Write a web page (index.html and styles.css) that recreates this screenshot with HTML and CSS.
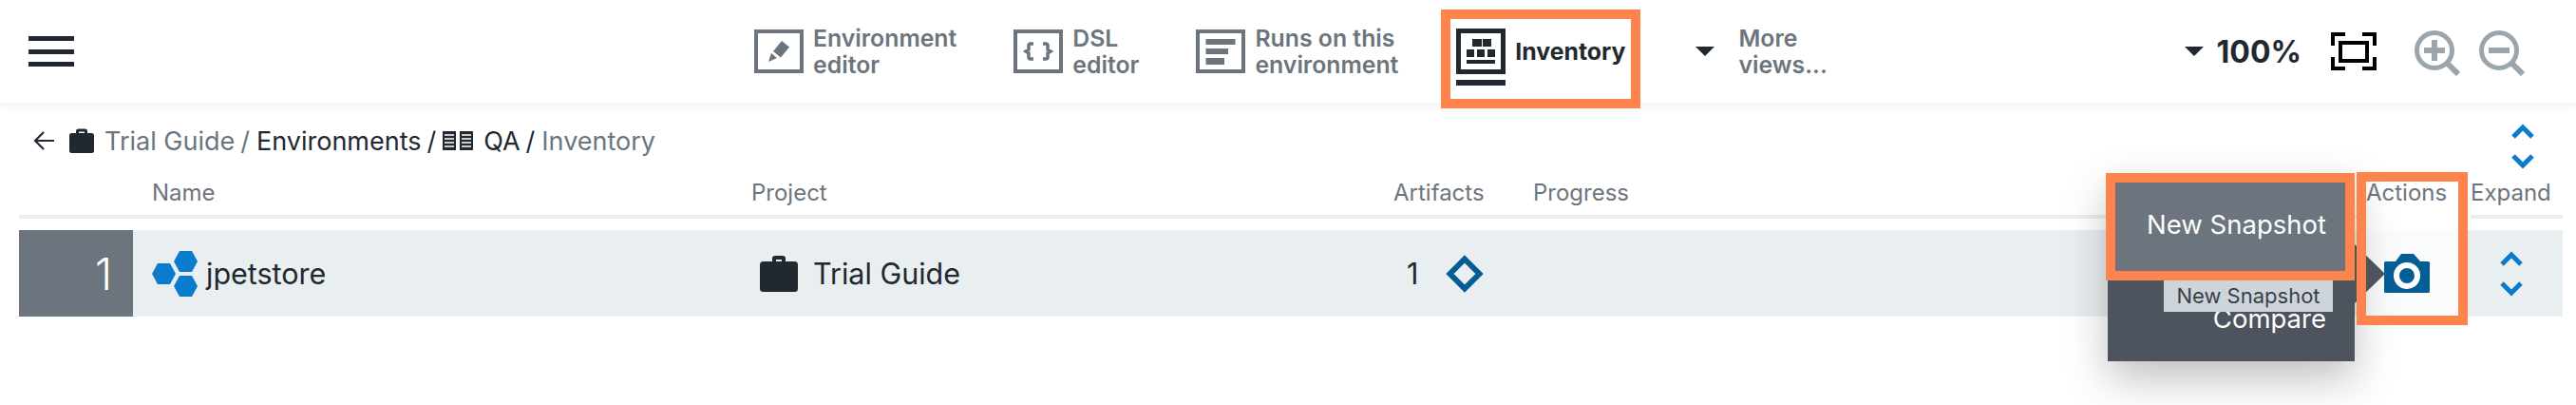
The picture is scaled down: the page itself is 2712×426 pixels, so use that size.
FILE: index.html
```html
<!DOCTYPE html>
<html lang="en">
<head>
<meta charset="utf-8">
<title>Inventory</title>
<link rel="stylesheet" href="styles.css">
</head>
<body>
<header class="topbar">
  <div class="burger"><span></span><span></span><span></span></div>
  <nav class="views">
    <div class="view">
      <svg class="view-icon" viewBox="0 0 52 46"><rect x="2" y="2" width="48" height="42" fill="none" stroke="#6c757d" stroke-width="4"/><path d="M15 34l3-9 6 5zM20 23l9-11 8 6.500-9 11z" fill="#6c757d"/></svg>
      <div class="view-label">Environment<br>editor</div>
    </div>
    <div class="view">
      <svg class="view-icon" viewBox="0 0 52 46"><rect x="2" y="2" width="48" height="42" fill="none" stroke="#6c757d" stroke-width="4"/><path d="M21 15h-3a2 2 0 0 0-2 2v4l-3 2 3 2v4a2 2 0 0 0 2 2h3M31 15h3a2 2 0 0 1 2 2v4l3 2-3 2v4a2 2 0 0 1-2 2h-3" fill="none" stroke="#6c757d" stroke-width="3.500"/></svg>
      <div class="view-label">DSL<br>editor</div>
    </div>
    <div class="view">
      <svg class="view-icon" viewBox="0 0 52 46"><rect x="2" y="2" width="48" height="42" fill="none" stroke="#6c757d" stroke-width="4"/><path d="M10.500 10h31v6h-31zM10.500 20H34v6H10.500zM10.500 30H30v7H10.500z" fill="#6c757d"/></svg>
      <div class="view-label">Runs on this<br>environment</div>
    </div>
    <div class="view view-active">
      <div class="inv-icon">
        <svg class="view-icon" viewBox="0 0 52 48"><rect x="2.500" y="2.500" width="47" height="43" fill="none" stroke="#212830" stroke-width="5"/><path d="M17 11h10v8H17zM28 11h9v8h-9zM11 22h8v8h-8zM22 22h8v8h-8zM33 22h8v8h-8zM11 33h30v4H11z" fill="#212830"/></svg>
        <span class="inv-bar"></span>
      </div>
      <div class="view-label">Inventory</div>
    </div>
    <div class="view view-more">
      <span class="caret"></span>
      <div class="view-label">More<br>views...</div>
    </div>
  </nav>
  <div class="zoombar">
    <span class="caret"></span>
    <span class="pct">100%</span>
    <svg class="fit" viewBox="0 0 48 40"><path d="M15 2H2v12M33 2h13v12M15 38H2V26M33 38h13V26" fill="none" stroke="#000" stroke-width="4"/><rect x="10" y="11" width="28" height="19" fill="none" stroke="#000" stroke-width="4"/></svg>
    <svg class="mag" viewBox="0 0 48 48"><circle cx="21" cy="21" r="18.500" fill="none" stroke="#9ba6ac" stroke-width="5"/><path d="M33 33l13 13" stroke="#9ba6ac" stroke-width="6"/><path d="M10 21h22M21 10v22" stroke="#9ba6ac" stroke-width="6"/></svg>
    <svg class="mag" viewBox="0 0 48 48"><circle cx="21" cy="21" r="18.500" fill="none" stroke="#9ba6ac" stroke-width="5"/><path d="M33 33l13 13" stroke="#9ba6ac" stroke-width="6"/><path d="M10 21h22" stroke="#9ba6ac" stroke-width="6"/></svg>
  </div>
</header>

<section class="crumbs-row">
  <div class="crumbs">
    <svg class="back" viewBox="0 0 22 22"><path d="M11 2L2 11l9 9M2 11h20" fill="none" stroke="#212830" stroke-width="2.200"/></svg>
    <svg class="bag" viewBox="0 0 26 26"><path d="M7 6V3a2.500 2.500 0 0 1 2.500-2.500h7A2.500 2.500 0 0 1 19 3v3h-3V3.500h-6V6z" fill="#212830"/><rect y="5" width="26" height="21" rx="2.500" fill="#212830"/></svg>
    <span class="muted">Trial Guide</span>
    <span class="muted sep">/</span>
    <span>Environments</span>
    <span class="sep">/</span>
    <svg class="env" viewBox="0 0 32 20"><path d="M0 0h14v20H0zM18 0h14v20H18z" fill="#212830"/><path d="M2 4h10M2 8h10M2 12h10M2 16h10M20 4h10M20 8h10M20 12h10M20 16h10" stroke="#fff" stroke-width="1.500"/></svg>
    <span class="qa">QA</span>
    <span class="sep">/</span>
    <span class="muted">Inventory</span>
  </div>
  <svg class="chev-all" viewBox="0 0 24 48"><path d="M2 14L12 4l10 10M2 34l10 10 10-10" fill="none" stroke="#0a7ccb" stroke-width="5"/></svg>
</section>

<div class="thead">
  <div class="th-index"></div>
  <div class="th-name">Name</div>
  <div>Project</div>
  <div>Artifacts</div>
  <div>Progress</div>
  <div class="th-actions">Actions</div>
  <div>Expand</div>
</div>

<div class="trow">
  <div class="td-index">1</div>
  <div class="td td-name">
    <svg class="hex" viewBox="0 0 48 48"><path d="M0 24l6-11h13l6 11-6 11H6zM23 11l6-11h13l6 11-6 11H29zM23 37l6-11h13l6 11-6 11H29z" fill="#0a7ccb"/></svg>
    <span>jpetstore</span>
  </div>
  <div class="td td-project">
    <svg class="bag-large" viewBox="0 0 40 38"><path d="M13 7V3a3 3 0 0 1 3-3h8a3 3 0 0 1 3 3v4h-4V4h-6v3z" fill="#212830"/><rect y="6" width="40" height="32" rx="3.500" fill="#212830"/></svg>
    <span>Trial Guide</span>
  </div>
  <div class="td td-artifacts">
    <span>1</span>
    <svg class="diamond" viewBox="0 0 40 40"><path d="M20 4.500L35.500 20 20 35.500 4.500 20z" fill="none" stroke="#045e96" stroke-width="6"/></svg>
  </div>
  <div class="td"></div>
  <div class="td td-actions">
    <svg class="camera" viewBox="0 0 48 41"><path d="M1.500 8H12l6-8h13l7 8h8.500A1.500 1.500 0 0 1 48 9.500v30a1.500 1.500 0 0 1-1.500 1.500h-45A1.500 1.500 0 0 1 0 39.500v-30A1.500 1.500 0 0 1 1.500 8z" fill="#045e96"/><circle cx="24" cy="23" r="11" fill="#045e96" stroke="#fff" stroke-width="6"/></svg>
  </div>
  <div class="td td-expand">
    <svg class="chev" viewBox="0 0 24 48"><path d="M2 14L12 4l10 10M2 34l10 10 10-10" fill="none" stroke="#0a7ccb" stroke-width="5"/></svg>
  </div>
</div>

<div class="menu">
  <div class="menu-new">New Snapshot</div>
  <div class="menu-compare">Compare</div>
  <div class="tooltip">New Snapshot</div>
</div>
<span class="pointer"></span>
<div class="callout-inventory"></div>
<div class="callout-actions"></div>
</body>
</html>
```
FILE: styles.css
```css
* { box-sizing: border-box; }
html, body { margin: 0; height: 426px; overflow: hidden; background: #fff; }
body { position: relative; font-family: Inter, "Liberation Sans", sans-serif; color: #212830; }
svg { display: block; flex: none; }

.topbar { height: 108px; display: flex; align-items: center; padding: 0 54px 0 30px; background: #fff; box-shadow: 0 2px 12px rgba(0,0,0,.07); position: relative; }
.burger { width: 48px; height: 32px; display: flex; flex-direction: column; justify-content: space-between; }
.burger span { height: 5px; background: #212830; }
.views { display: flex; align-items: center; margin-left: 716px; }
.view { display: flex; align-items: center; gap: 10px; margin-right: 60px; }
.view-icon { width: 52px; height: 46px; }
.view-label { font-size: 24.800px; line-height: 28px; font-weight: 600; color: #6c757d; white-space: nowrap; }
.view-active { margin-left: 1px; margin-right: 74px; gap: 10px; }
.view-active .view-label { color: #212830; font-weight: 700; }
.inv-icon { height: 60px; display: flex; flex-direction: column; justify-content: space-between; margin-top: 12px; }
.inv-icon .view-icon { height: 48px; }
.inv-bar { height: 6px; background: #212830; }
.view-more { gap: 25px; margin-right: 0; }
.caret { width: 0; height: 0; border-style: solid; border-width: 10px 10px 0; border-color: #212830 transparent transparent; }
.zoombar { margin-left: auto; display: flex; align-items: center; }
.pct { font-size: 32px; font-weight: 700; margin-left: 14px; }
.fit { width: 48px; height: 40px; margin-left: 31px; }
.mag { width: 48px; height: 48px; margin-left: 40px; margin-top: 4px; }
.mag + .mag { margin-left: 20px; }

.crumbs-row { height: 80px; padding: 22px 44px 0 35px; display: flex; justify-content: space-between; align-items: flex-start; }
.crumbs { display: flex; align-items: center; height: 36px; font-size: 27px; white-space: nowrap; }
.back { width: 22px; height: 22px; }
.bag { width: 26px; height: 26px; margin: 0 11px 0 16px; }
.muted { color: #6c757d; }
.sep { margin: 0 7px 0 6px; }
.env { width: 32px; height: 20px; margin: 0 11px 0 0; }
.chev-all { width: 24px; height: 48px; }

.thead, .trow { margin: 0 14px 0 20px; display: grid; grid-template-columns: 120px 651px 676px 147px 877px 110px 97px; }
.thead { height: 42px; border-bottom: 4px solid #e9eef1; font-size: 24px; line-height: 30px; color: #6c757d; white-space: nowrap; }
.th-name { padding-left: 20px; }
.th-actions { background: #fff; height: 42px; position: relative; }
.trow { margin-top: 12px; height: 91px; background: #e9eef1; }
.td-index { background: #6c757d; color: #fff; font-size: 46px; font-weight: 300; display: flex; align-items: center; justify-content: flex-end; padding-right: 22px; }
.td { display: flex; align-items: center; font-size: 30.500px; white-space: nowrap; }
.td-name { padding-left: 20px; gap: 9px; }
.hex { width: 48px; height: 48px; }
.td-project { padding-left: 9px; gap: 16px; }
.bag-large { width: 40px; height: 38px; }
.td-artifacts { padding-left: 14px; gap: 29px; }
.diamond { width: 40px; height: 40px; }
.td-actions { padding-left: 19px; background: linear-gradient(#fafbfd, #fafbfd) no-repeat left top / 97px 100%; }
.camera { width: 48px; height: 41px; }
.td-expand { padding-left: 31px; }
.chev { width: 24px; height: 48px; }

.menu { position: absolute; left: 2219px; top: 182px; width: 260px; height: 198px; background: #4e545d; box-shadow: 0 18px 42px rgba(0,0,0,.25); color: #fff; font-size: 27.500px; }
.menu-new { margin-left: -2px; height: 113px; border: 10px solid #ff834d; background: #6c757d; display: flex; align-items: center; justify-content: flex-end; padding: 0 20px 5px 0; }
.menu-compare { height: 85px; display: flex; align-items: center; justify-content: flex-end; padding: 0 30px 5px 0; }
.tooltip { position: absolute; left: 59px; top: 113px; width: 178px; height: 33px; background: #ced4dc; color: #3a3f45; font-size: 22px; line-height: 33px; text-align: center; }
.pointer { position: absolute; left: 2479px; top: 257px; width: 0; height: 0; border-style: solid; border-width: 31px 0 31px 32px; border-color: transparent transparent transparent #4e545d; }
.callout-inventory { position: absolute; left: 1517px; top: 10px; width: 210px; height: 104px; border: 10px solid #ff834d; }
.callout-actions { position: absolute; left: 2481px; top: 181px; width: 117px; height: 161px; border: 10px solid #ff834d; }
```
